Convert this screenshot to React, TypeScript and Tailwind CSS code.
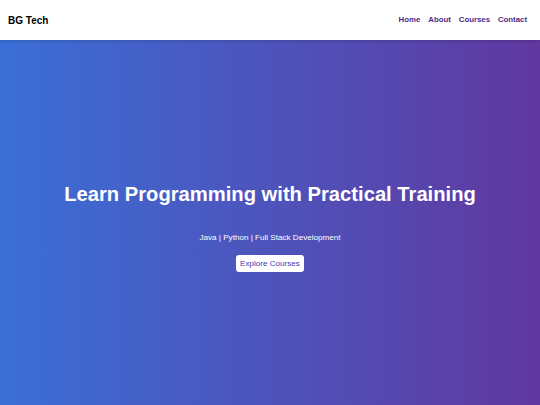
export default function App() {
  return (
    <div className="min-h-screen flex flex-col font-['Liberation_Sans',Arial,sans-serif]">
      {/* Header */}
      <header className="h-10 bg-white flex items-center justify-between px-2 shadow-[0_1px_3px_rgba(0,0,0,0.15)] relative z-10">
        <h1 className="text-[10px] font-bold text-black">BG Tech</h1>
        <nav className="flex items-center gap-[8px] pr-[5px]">
          <a href="#" className="text-[7.8px] font-bold text-[#4b2a85]">Home</a>
          <a href="#" className="text-[7.8px] font-bold text-[#4b2a85]">About</a>
          <a href="#" className="text-[7.8px] font-bold text-[#4b2a85]">Courses</a>
          <a href="#" className="text-[7.8px] font-bold text-[#4b2a85]">Contact</a>
        </nav>
      </header>

      {/* Hero */}
      <section className="h-[365px] bg-[linear-gradient(to_right,#3a6fd7,#60389f)] flex flex-col items-center justify-center text-white text-center pt-[6px]">
        <h2 className="text-[20.2px] font-bold">Learn Programming with Practical Training</h2>
        <p className="text-[8.1px] mt-[23px]">Java | Python | Full Stack Development</p>
        <button className="mt-[11px] bg-white text-[#3e3ab8] text-[8.1px] leading-[12px] px-[4px] py-[2.5px] rounded-[3px]">
          Explore Courses
        </button>
      </section>
    </div>
  );
}
